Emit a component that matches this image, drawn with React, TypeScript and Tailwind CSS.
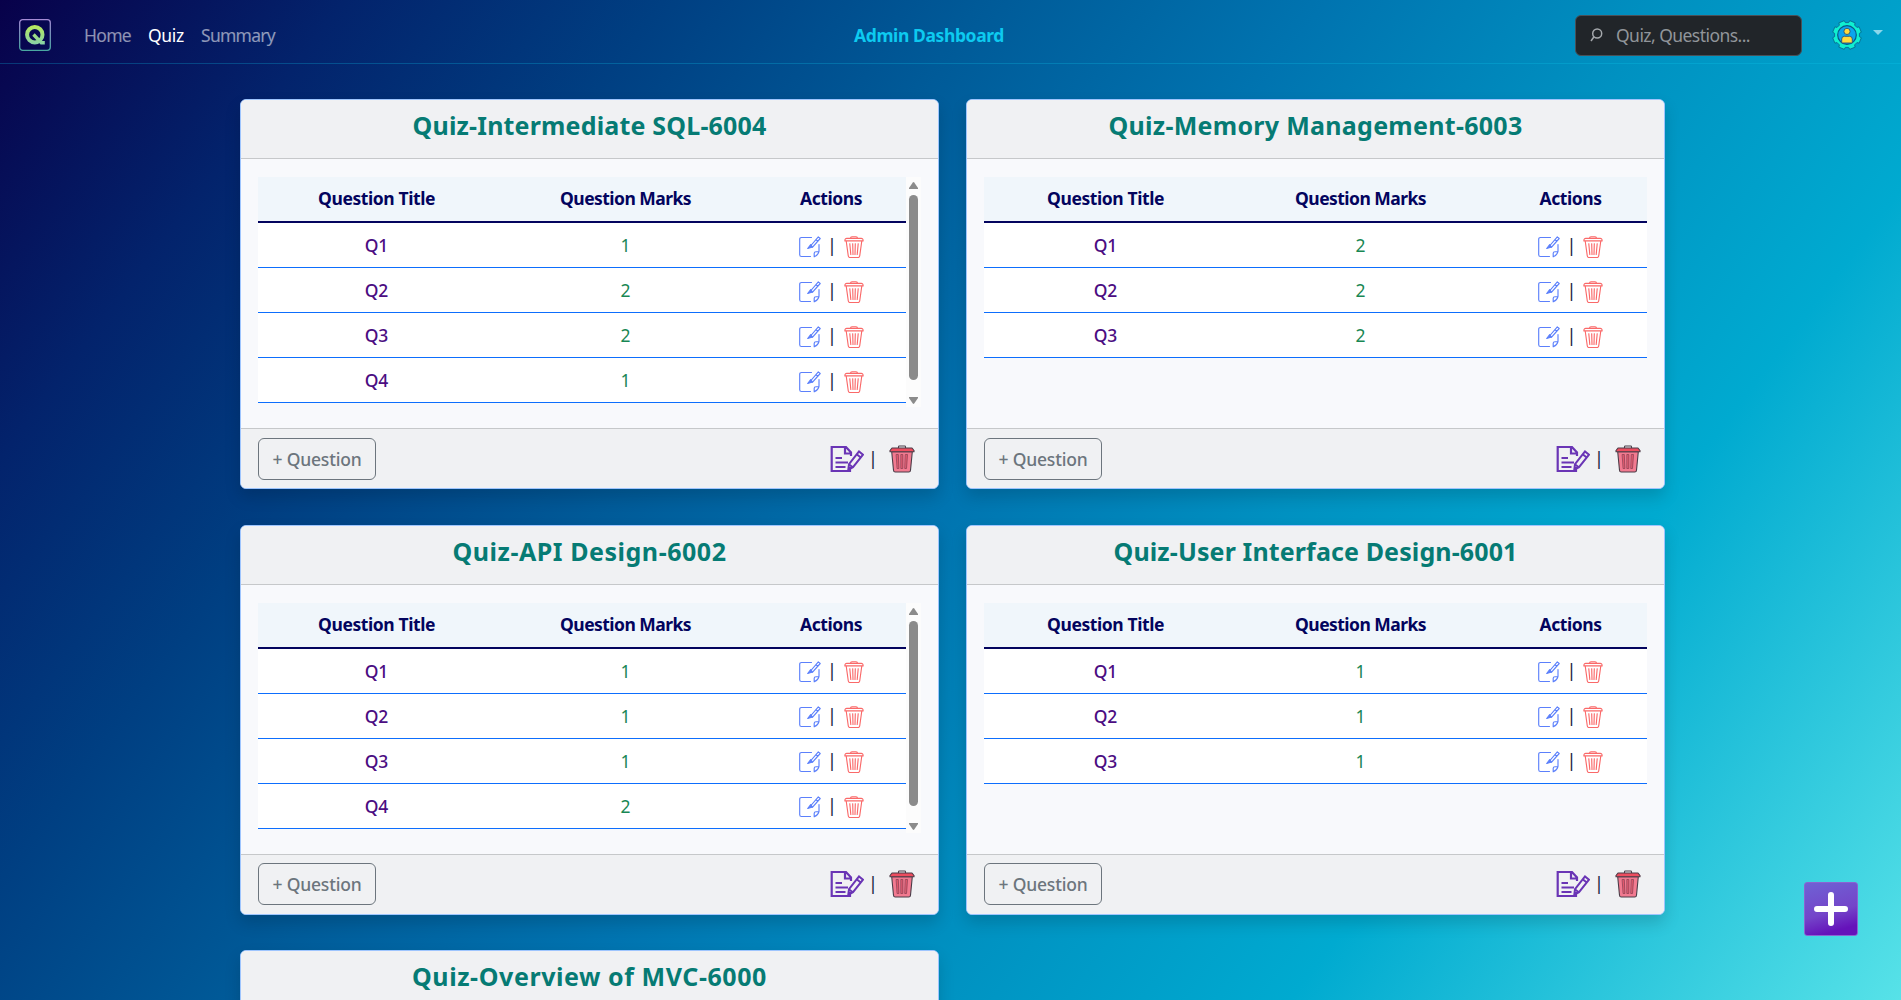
import React from "react";

const quizzes = [
  { title: "Quiz-Intermediate SQL-6004", marks: [1, 2, 2, 1], scroll: true, width: 354 },
  { title: "Quiz-Memory Management-6003", marks: [2, 2, 2], scroll: false, width: 414 },
  { title: "Quiz-API Design-6002", marks: [1, 1, 1, 2], scroll: true, width: 274 },
  { title: "Quiz-User Interface Design-6001", marks: [1, 1, 1], scroll: false, width: 404 },
  { title: "Quiz-Overview of MVC-6000", marks: [1, 2, 1], scroll: false, width: 355 },
];

/* Text whose advance is fitted to a known width */
function Fit({ text, width, className = "" }: { text: string; width: number; className?: string }) {
  const ref = React.useRef<HTMLSpanElement>(null);
  const [spacing, setSpacing] = React.useState(0);
  React.useLayoutEffect(() => {
    if (ref.current) {
      ref.current.style.letterSpacing = "0px";
      const natural = ref.current.getBoundingClientRect().width;
      const next = (width - natural) / text.length;
      ref.current.style.letterSpacing = `${next}px`;
      setSpacing(next);
    }
  }, [text, width]);
  return (
    <span ref={ref} className={`inline-block whitespace-pre ${className}`} style={{ letterSpacing: spacing }}>
      {text}
    </span>
  );
}

function EditSmall() {
  return (
    <svg width="22" height="22" viewBox="0 0 22 22" fill="none" stroke="#5c80fb" strokeWidth="1.15" strokeLinecap="round" strokeLinejoin="round">
      <path d="M12.500 1.500H2.500Q.7 1.500.7 3.300v15.400q0 1.800 1.800 1.800h9M20 8.500v6.500M20 15.700h-3q-1.800 0-1.800 1.600v3.500q3.600-1.200 4.800-5.100z" />
      <path d="M11.500 10 19.300.9l1.900 1.600-7.600 8.700zM17 3.600l1.900 1.600" />
      <path d="m11.700 8.700-3 3.800 4.800-1.500z" fill="#5c80fb" />
    </svg>
  );
}

function TrashSmall() {
  return (
    <svg width="20" height="22" viewBox="0 0 20 22" fill="none" stroke="#fa6969" strokeWidth="1.150" strokeLinecap="round" strokeLinejoin="round">
      <path d="M6.500 2.300q0-1.600 1.500-1.600h4q1.500 0 1.500 1.600M.9 4.900Q.8 2.400 2.800 2.400h14.400q2 0 1.900 2.500zM2.200 5l2.100 15q.2 1.500 1.700 1.500h8q1.500 0 1.700-1.500L17.800 5M5.800 7.700l1 10.800M8.700 7.700l.3 10.800M11.300 7.700l-.3 10.800M14.200 7.700l-1 10.800" />
    </svg>
  );
}

function EditLarge() {
  return (
    <svg width="34" height="28" viewBox="0 0 34 28" fill="none" stroke="#6a35b5" strokeWidth="2.200" strokeLinejoin="miter">
      <path d="M21 11V7.500l-5-5.500H1.700v24H20v-4M15 2v6.500h6" />
      <path d="M5.500 13h6.500M5.500 17.500h12.500M5.500 22h10" strokeWidth="1.900" />
      <path d="M18.300 24.700 19 19.200 29 6.500l4 3.200-10 12.500zM26.700 9.300l4 3.200M19.200 19.500l3.500 2.800" strokeWidth="2" />
    </svg>
  );
}

function TrashLarge() {
  return (
    <svg width="26" height="28" viewBox="0 0 26 28" strokeLinecap="round" strokeLinejoin="round" stroke="#4b3d48" strokeWidth="1.100">
      <path d="M9.500 3.500V1.800q0-.8.800-.8h5.400q.8 0 .8.800v1.700" fill="none" />
      <path d="m2.700 6.700 1.800 18.500q.1 1.800 1.800 1.800h13.400q1.700 0 1.800-1.800l1.800-18.500z" fill="#f27a90" />
      <path d="M1 5.500 3 3h20l2 2.500v1.300H1z" fill="#ee4d5f" />
      <path d="M7.500 9.500h1.800l.6 14H8.500zM12.200 9.500h1.600v14h-1.600zM16.700 9.500h1.800l-1 14h-1.400z" fill="#e4586d" stroke="#8e4355" strokeWidth=".8" />
    </svg>
  );
}

function Logo() {
  return (
    <svg width="32" height="32" viewBox="0 0 32 32" fill="none">
      <defs>
        <linearGradient id="frame" x2="0" y2="1"><stop stopColor="#a58bd5" /><stop offset="1" stopColor="#4aa8a2" /></linearGradient>
        <linearGradient id="mark" x1="0" y1="6" x2="0" y2="26" gradientUnits="userSpaceOnUse"><stop stopColor="#b9ea5c" /><stop offset="1" stopColor="#86d0aa" /></linearGradient>
      </defs>
      <rect x=".7" y=".7" width="30.600" height="30.600" rx="3" stroke="url(#frame)" strokeWidth="1.300" />
      <circle cx="15.800" cy="15.700" r="7.700" stroke="url(#mark)" strokeWidth="4" />
      <path d="m14.500 15.500 7.800 8.300h3.500" stroke="url(#mark)" strokeWidth="3.400" />
    </svg>
  );
}

/* Outline of an eight-toothed gear centred on (15, 15) */
const gearPoints = Array.from({ length: 8 }, (_, i) => i * 45 + 22.5)
  .flatMap((a) => [
    [a - 15, 12.5],
    [a - 11.500, 14.6],
    [a + 11.500, 14.6],
    [a + 15, 12.5],
  ])
  .map(([deg, r]) => {
    const t = (deg * Math.PI) / 180;
    return `${(15 + r * Math.cos(t)).toFixed(2)},${(15 + r * Math.sin(t)).toFixed(2)}`;
  })
  .join(" ");

function Avatar() {
  return (
    <svg width="30" height="30" viewBox="0 0 30 30">
      <polygon points={gearPoints} fill="#0ff0d0" stroke="#0a6a92" strokeWidth=".9" strokeLinejoin="round" />
      <circle cx="15" cy="15" r="9.300" fill="#0ba5ed" stroke="#075985" strokeWidth="1.200" />
      <path d="M9.700 23v-4q0-2.700 2.800-2.700h5q2.800 0 2.800 2.700v4z" fill="#ffda3d" stroke="#26527d" strokeWidth=".9" />
      <circle cx="15" cy="11.400" r="3.100" fill="#ffda3d" stroke="#26527d" strokeWidth=".9" />
    </svg>
  );
}

function QuizCard({ quiz }: { quiz: (typeof quizzes)[number] }) {
  const cols = quiz.scroll ? "grid-cols-[237px_261px_150px]" : "grid-cols-[243px_267px_153px]";
  return (
    <article className="flex h-[390px] w-[699px] flex-col overflow-hidden rounded-md border border-[#9ec5fe] bg-[#f8f9fc] shadow-[0_8px_16px_rgba(0,0,0,0.15)]">
      <header className="h-[59px] shrink-0 border-b border-[#c6c8ca] bg-[#f0f1f3] pt-[6.4px] text-center text-[25px] leading-[38px] font-bold text-[#067b74]">
        <Fit text={quiz.title} width={quiz.width} />
      </header>
      <div className="flex h-[269px] shrink-0 px-[17px] pt-[18px]">
        <div className="flex-1">
          <div className={`grid ${cols} h-[46px] items-center border-b-2 border-[#03045e] bg-[#f0f6fb] text-center text-[17.5px] leading-[42px] font-bold text-[#03045e]`}>
            <Fit text="Question Title" width={117} className="-mt-[2px] justify-self-center" />
            <Fit text="Question Marks" width={131} className="-mt-[2px] justify-self-center" />
            <Fit text="Actions" width={62} className="-mt-[2px] justify-self-center" />
          </div>
          {quiz.marks.map((mark, i) => (
            <div key={i} className={`grid ${cols} h-[45px] items-center border-b border-[#0d6efd] bg-white text-center text-[17.5px] leading-[42px]`}>
              <span className="font-medium text-[#4b0d82]">Q{i + 1}</span>
              <span className="text-[#198754]">{mark}</span>
              <span className="flex items-center justify-center pt-[3px]">
                <EditSmall />
                <span className="mr-[6.5px] mb-[4px] ml-[6.500px] w-[10px] text-center text-[18px] leading-5 text-[#17233f]">|</span>
                <TrashSmall />
              </span>
            </div>
          ))}
        </div>
        {quiz.scroll && (
          <div className="flex h-[230px] w-[15px] flex-col items-center bg-[#fcfcfc] pt-[5px]">
            <svg width="9" height="7" viewBox="0 0 9 7" fill="#8b8b8b"><path d="M3.800.5Q4.500-.3 5.200.5L9 6v1H0V6z" /></svg>
            <div className="mt-[6px] h-[185px] w-[9px] rounded-full bg-[#8b8b8b]" />
            <svg className="mt-[17px]" width="9" height="7" viewBox="0 0 9 7" fill="#8b8b8b"><path d="M0 0h9v1L5.200 6.500q-.7.800-1.400 0L0 1z" /></svg>
          </div>
        )}
      </div>
      <footer className="flex flex-1 items-center justify-between border-t border-[#c6c8ca] bg-[#f0f1f3] pr-[23.5px] pl-[17px]">
        <button className="h-[42px] w-[118px] rounded-[6px] border border-[#6c757d] pt-px text-[17.5px] font-medium text-[#6c757d]">
          <Fit text="+ Question" width={89} />
        </button>
        <div className="flex items-center">
          <EditLarge />
          <span className="mr-[10.5px] mb-[2px] ml-[4.5px] w-[10px] text-center text-[18px] leading-5 text-[#17233f]">|</span>
          <TrashLarge />
        </div>
      </footer>
    </article>
  );
}

export default function App() {
  return (
    <div className="relative flex h-[1000px] w-full flex-col overflow-hidden bg-[linear-gradient(127deg,#08014a_0%,#03236c_13%,#003f82_25%,#005a98_37%,#0074b0_50%,#0091c1_63%,#00aad0_77%,#57e2e8_100%)] font-['Noto_Sans','Open_Sans',sans-serif]">
      <nav className="flex h-[64px] shrink-0 items-center border-b border-[#0dcaf0]/25 pb-px pl-[19px]">
        <span className="mt-[7px]"><Logo /></span>
        <div className="ml-[33px] flex gap-[17px] pt-[9px] text-[17.5px] text-white/55">
          <Fit text="Home" width={47} />
          <Fit text="Quiz" width={36} className="text-white" />
          <Fit text="Summary" width={74} />
        </div>
        <div className="ml-[579px] pt-[9px] text-[17.5px] font-bold text-[#0dcaf0]"><Fit text="Admin Dashboard" width={150} /></div>
        <label className="mt-[8px] ml-auto flex h-[41px] w-[227px] items-center rounded-[6px] border border-[#495057] bg-[#212529] pl-[14px] text-[17.5px] text-[#91959a]">
          <svg width="13" height="14" viewBox="0 0 13 14" fill="none" stroke="#a5a8ac" strokeWidth="1.500"><circle cx="7.200" cy="5.500" r="4.500" /><path d="M4 8.800 1 13" /></svg>
          <span className="ml-[13px] pt-px"><Fit text="Quiz, Questions..." width={134} /></span>
        </label>
        <span className="mt-[8px] ml-[30px]"><Avatar /></span>
        <svg className="mt-[2px] mr-[18px] ml-[11px]" width="10" height="5" viewBox="0 0 10 5"><path d="M0 0h10L5 5z" fill="#8bd7eb" /></svg>
      </nav>
      <main className="mt-[35px] ml-[240px] grid w-[1425px] grid-cols-2 gap-x-[27px] gap-y-[35.5px]">
        {quizzes.map((q) => <QuizCard key={q.title} quiz={q} />)}
      </main>
      <button className="absolute top-[882px] left-[1804px] grid h-[54px] w-[54px] place-items-center rounded-[3px] border border-[#8b63d2] bg-[linear-gradient(165deg,#6f62d4_0%,#7445c9_55%,#6512ba_85%)]">
        <svg width="34" height="34" viewBox="0 0 34 34" stroke="#fff" strokeWidth="6" strokeLinecap="round"><path d="M17 3v28M3 17h28" /></svg>
      </button>
    </div>
  );
}
